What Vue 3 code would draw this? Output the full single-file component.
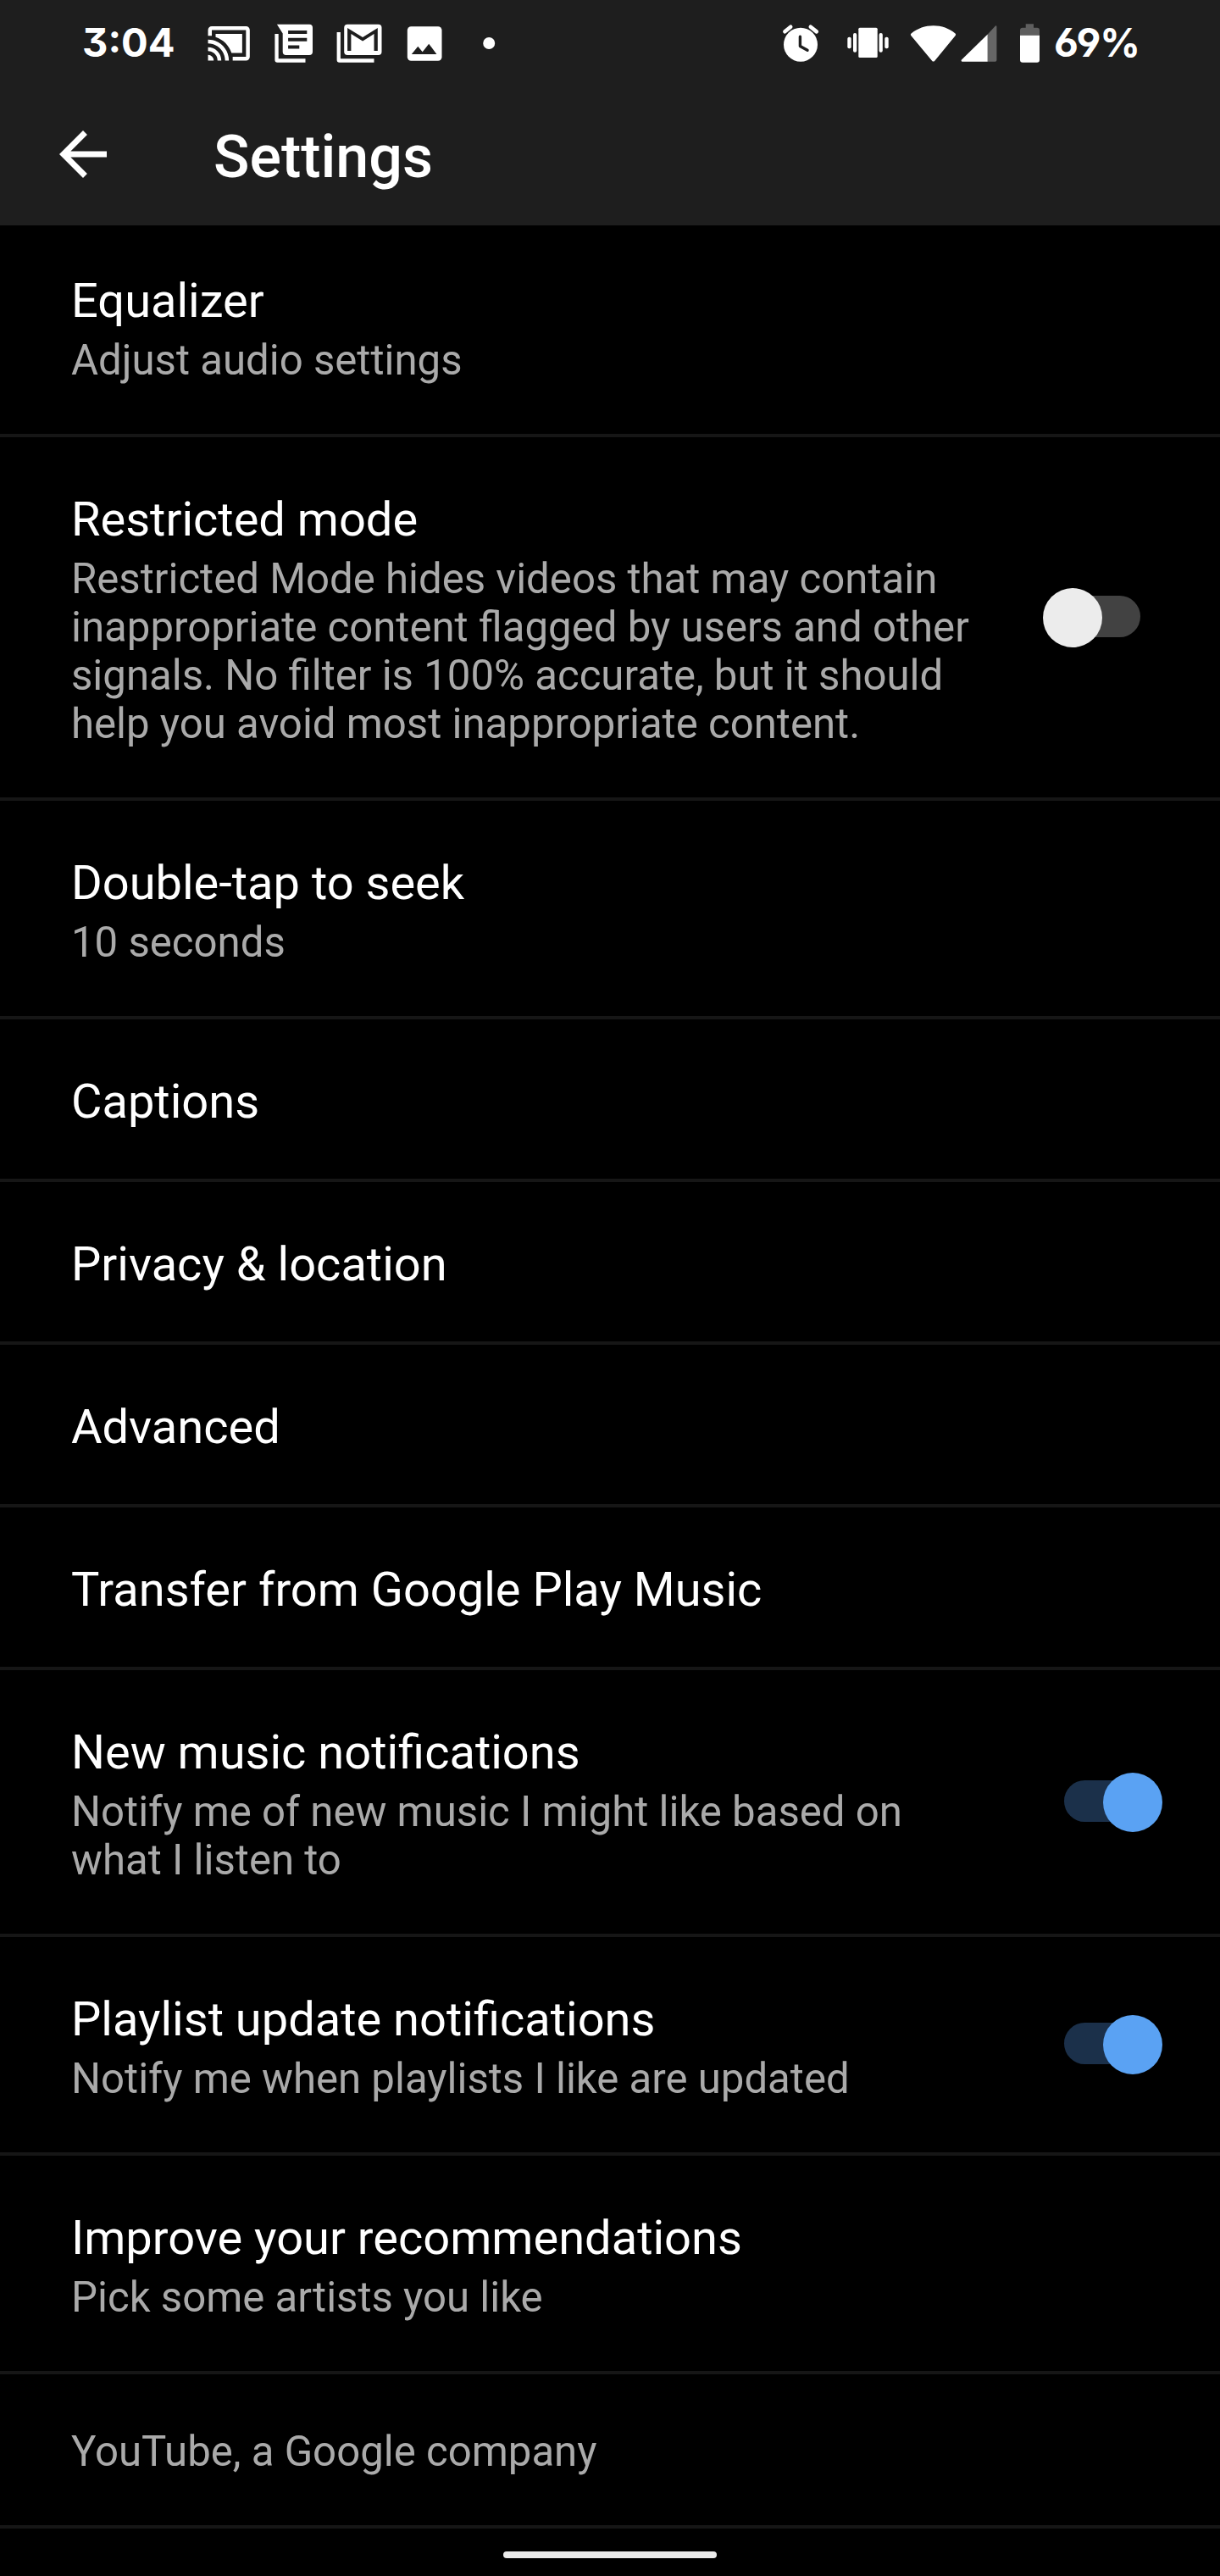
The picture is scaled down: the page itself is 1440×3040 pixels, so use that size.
<script setup>
import { ref } from 'vue'

const items = ref([
  { title: 'Equalizer', summary: 'Adjust audio settings' },
  {
    title: 'Restricted mode',
    summary: 'Restricted Mode hides videos that may contain inappropriate content flagged by users and other signals. No filter is 100% accurate, but it should help you avoid most inappropriate content.',
    toggle: true,
    on: false
  },
  { title: 'Double-tap to seek', summary: '10 seconds' },
  { title: 'Captions' },
  { title: 'Privacy & location' },
  { title: 'Advanced' },
  { title: 'Transfer from Google Play Music' },
  {
    title: 'New music notifications',
    summary: 'Notify me of new music I might like based on what I listen to',
    toggle: true,
    on: true
  },
  {
    title: 'Playlist update notifications',
    summary: 'Notify me when playlists I like are updated',
    toggle: true,
    on: true
  },
  { title: 'Improve your recommendations', summary: 'Pick some artists you like' },
  { summary: 'YouTube, a Google company' }
])

const onItemClick = (item) => {
  if (item.toggle) item.on = !item.on
}
</script>

<template>
  <div class="screen">
    <header class="header">
      <div class="status-bar">
        <span class="clock">3:04</span>
        <div class="notifications">
          <!-- Cast -->
          <svg viewBox="0 0 52 50" width="52" height="50" fill="#fff">
            <path transform="translate(-0.7 -1.6) scale(2.24)" d="M1 18v3h3c0-1.66-1.34-3-3-3zm0-4v2c2.76 0 5 2.24 5 5h2c0-3.87-3.13-7-7-7zm18-7H5v1.63c3.96 1.28 7.09 4.41 8.37 8.37H19V7zM1 10v2c4.97 0 9 4.03 9 9h2c0-6.08-4.93-11-11-11zm20-7H3c-1.1 0-2 .9-2 2v3h2V5h18v14h-7v2h7c1.1 0 2-.9 2-2V5c0-1.1-.9-2-2-2z" />
          </svg>
          <!-- Messages -->
          <svg viewBox="0 0 52 50" width="52" height="50" fill="#fff">
            <path d="M5.9 2.7H44a4 4 0 0 1 4 4V35a4 4 0 0 1-4 4H16.7a4 4 0 0 1-4-4V13.5z" />
            <path d="M3.4 14h4.3v29.3h31.8v4.4H6.4a3 3 0 0 1-3-3z" />
            <path fill="#1e1e1e" d="M19.1 10h22.2v3.9H19.1zM19.1 18.7h22.2v4H19.1zM19.1 27.5h13.2v4H19.1z" />
          </svg>
          <!-- Mail -->
          <svg viewBox="0 0 52 50" width="52" height="50" fill="#fff">
            <rect x="8.2" y="2.7" width="44.3" height="36.3" rx="4" />
            <path d="M-.4 12h4.3v31.3h39.6v4.4H2.6a3 3 0 0 1-3-3z" />
            <path fill="#1e1e1e" d="M12.1 34V7l18 11L47.8 7v27h-4.3V14L30.1 22.4 16.4 14v20z" />
          </svg>
          <!-- Picture -->
          <svg viewBox="0 0 52 50" width="52" height="50" fill="#fff">
            <rect x="5.8" y="5.3" width="40.7" height="40.4" rx="4.5" />
            <path fill="#1e1e1e" d="M10.8 38l7.5-9.2 5.4 6.5 7.5-9.6L40.4 38z" />
          </svg>
          <svg viewBox="0 0 52 50" width="52" height="50" fill="#fff">
            <circle cx="25.2" cy="25" r="7" />
          </svg>
        </div>

        <div class="system">
          <!-- Alarm -->
          <svg viewBox="0 0 50 50" width="50" height="50" fill="none">
            <circle cx="25" cy="26.7" r="20" fill="#fff" />
            <path d="M24.4 17.3v11.2l8.6 4.8" stroke="#1e1e1e" stroke-width="3.4" stroke-linecap="round" stroke-linejoin="round" />
            <path d="M6.4 11.2l6.8-5.4M36.8 5.8l7 5.6" stroke="#fff" stroke-width="4.6" stroke-linecap="round" />
          </svg>
          <!-- Vibrate -->
          <svg class="vibrate" viewBox="0 0 50 50" width="50" height="50" fill="#fff">
            <rect x="13.3" y="6.7" width="22.4" height="35.3" rx="1.5" />
            <rect x="7" y="13" width="4.2" height="22.7" rx="2" />
            <rect x=".3" y="17.7" width="4.4" height="13.5" rx="2" />
            <rect x="37.6" y="13" width="4.2" height="22.7" rx="2" />
            <rect x="44.3" y="17.7" width="4.4" height="13.5" rx="2" />
          </svg>
          <!-- Wi-Fi -->
          <svg class="wifi" viewBox="0 0 56 50" width="56" height="50" fill="#fff">
            <path d="M1.6 13.6C9 7.4 18 4.3 27.7 4.3s18.6 3.1 25.8 9.3c.8.7.8 1.5.2 2.3L29.3 45.7c-1 1.2-2.3 1.2-3.2 0L1.3 15.9c-.6-.8-.5-1.6.3-2.3z" />
          </svg>
          <!-- Signal -->
          <svg class="signal" viewBox="0 0 46 50" width="46" height="50">
            <path fill="#666" d="M33.7 14.5l8.8-9.6c.8-.9 1.9-.7 1.9.5V45a1.7 1.7 0 0 1-1.7 1.7h-9z" />
            <path fill="#fff" d="M33.7 14.5v32.2H3.9c-1.3 0-1.7-1.2-.9-2.1z" />
          </svg>
          <!-- Battery -->
          <svg class="battery" viewBox="0 0 25 50" width="25" height="50">
            <path fill="#5e5e5e" d="M7.7 2.3H17v4.4h4a3 3 0 0 1 3 3v6H1v-6a3 3 0 0 1 3-3h3.7z" />
            <path fill="#fff" d="M1 15.7h23v29a3 3 0 0 1-3 3H4a3 3 0 0 1-3-3z" />
          </svg>
          <span class="percent">69%</span>
        </div>
      </div>

      <div class="toolbar">
        <svg class="back" viewBox="0 0 24 24" width="84" height="84" fill="#fff">
          <path d="M20 11H7.83l5.59-5.59L12 4l-8 8 8 8 1.41-1.41L7.83 13H20v-2z" />
        </svg>
        <h1 class="title">Settings</h1>
      </div>
    </header>

    <main class="list">
      <div v-for="(item, i) in items" :key="i" class="item" @click="onItemClick(item)">
        <div class="item-text">
          <div v-if="item.title" class="item-title">{{ item.title }}</div>
          <div v-if="item.summary" class="item-summary">{{ item.summary }}</div>
        </div>
        <div v-if="item.toggle" class="switch" :class="{ on: item.on }">
          <div class="thumb"></div>
        </div>
      </div>
    </main>

    <footer class="nav-bar">
      <div class="nav-handle"></div>
    </footer>
  </div>
</template>

<style>
body {
  margin: 0;
  background: #000;
}
</style>

<style scoped>
.screen {
  width: 1440px;
  height: 3040px;
  display: flex;
  flex-direction: column;
  overflow: hidden;
  background: #000;
  color: #fff;
  font-family: Roboto, "Liberation Sans", sans-serif;
}

svg {
  display: block;
  flex-shrink: 0;
  overflow: visible;
}

.header {
  height: 266px;
  background: #1e1e1e;
}

.status-bar {
  height: 102px;
  display: flex;
  align-items: center;
  padding: 0 100px 0 97px;
  box-sizing: border-box;
  font-family: Inter, Roboto, sans-serif;
  font-size: 47px;
  font-weight: 650;
  line-height: 50px;
  font-feature-settings: "cv09", "cv03", "cv04";
}

.clock {
  width: 146.5px;
  white-space: nowrap;
}

.notifications {
  display: flex;
  gap: 25px;
}

.system {
  display: flex;
  align-items: center;
  margin-left: auto;
}

.vibrate {
  margin-left: 30px;
}

.wifi {
  margin-left: 24px;
}

.signal {
  margin-left: 2px;
}

.battery {
  margin: 0 16px 0 25px;
}

.percent {
  width: 96px;
  white-space: nowrap;
  letter-spacing: -1.2px;
}

.clock,
.percent {
  margin-top: -2px;
}

.toolbar {
  height: 164px;
  display: flex;
  align-items: center;
  padding: 0 56px;
}

.back {
  margin-bottom: 4px;
}

.title {
  margin: 2px 0 0 112px;
  font-size: 70px;
  font-weight: 500;
  line-height: 82px;
}

.item {
  display: flex;
  align-items: center;
  padding: 64px 68px 58px 84px;
  border-bottom: 4px solid #161616;
}

.item:first-child {
  padding-top: 56px;
}

.item:last-child {
  padding-top: 63px;
}

.item-text {
  flex: 1;
}

.item-title {
  font-size: 56px;
  line-height: 66px;
}

.item-summary {
  font-size: 49.15px;
  line-height: 57px;
  color: #aaa;
}

.item-title + .item-summary {
  margin-top: 9px;
}

.switch {
  width: 141px;
  height: 70px;
  flex-shrink: 0;
  display: flex;
  align-items: center;
  margin: -9px 0 -3px 70px;
  position: relative;
}

/* the track is shorter than the thumb travel */
.switch::before {
  content: "";
  position: absolute;
  top: 9px;
  left: 25px;
  width: 90px;
  height: 49px;
  border-radius: 25px;
  background: #424242;
}

.thumb {
  width: 70px;
  height: 70px;
  border-radius: 50%;
  background: #ececec;
  z-index: 1;
}

.switch.on {
  justify-content: flex-end;
}

.switch.on::before {
  background: #1b304a;
}

.switch.on .thumb {
  background: #5aa2f3;
}

.nav-bar {
  flex: 1;
  display: flex;
  justify-content: center;
  padding-top: 27px;
}

.nav-handle {
  width: 252px;
  height: 8px;
  border-radius: 4px;
  background: #ebebeb;
}
</style>
